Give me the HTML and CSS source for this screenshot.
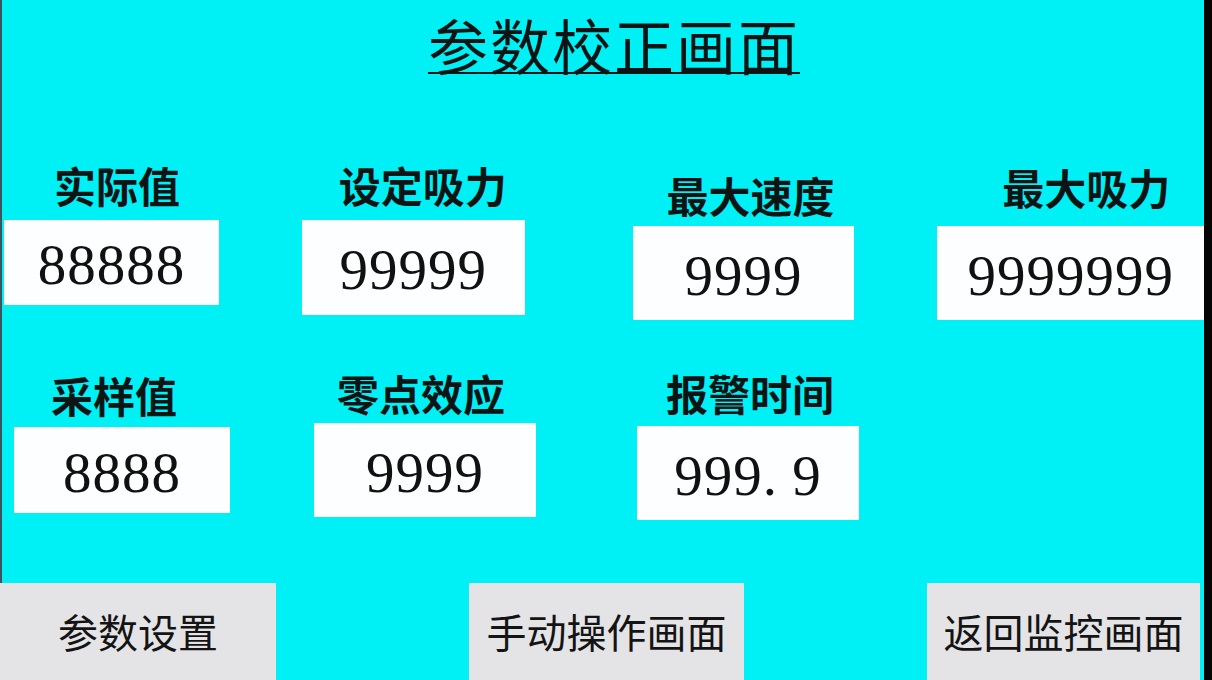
FILE: index.html
```html
<!DOCTYPE html>
<html lang="zh-CN">
<head>
<meta charset="utf-8">
<title>参数校正画面</title>
<link rel="stylesheet" href="styles.css">
</head>
<body>
<div class="screen">
  <h1 class="title"><span class="title-text">参数校正画面</span></h1>

  <div class="row row1">
    <div class="field f1">
      <div class="label">实际值</div>
      <div class="box">88888</div>
    </div>
    <div class="field f2">
      <div class="label">设定吸力</div>
      <div class="box">99999</div>
    </div>
    <div class="field f3">
      <div class="label">最大速度</div>
      <div class="box">9999</div>
    </div>
    <div class="field f4">
      <div class="label">最大吸力</div>
      <div class="box">9999999</div>
    </div>
  </div>

  <div class="row row2">
    <div class="field f5">
      <div class="label">采样值</div>
      <div class="box">8888</div>
    </div>
    <div class="field f6">
      <div class="label">零点效应</div>
      <div class="box">9999</div>
    </div>
    <div class="field f7">
      <div class="label">报警时间</div>
      <div class="box">999<span class="dot">.</span>9</div>
    </div>
  </div>

  <div class="actions">
    <button class="btn b1">参数设置</button>
    <button class="btn b2">手动操作画面</button>
    <button class="btn b3">返回监控画面</button>
  </div>
</div>
</body>
</html>
```

FILE: styles.css
```css
html, body {
  margin: 0;
  padding: 0;
  background: #050505;
  overflow: hidden;
}

.screen {
  width: 1204px;
  height: 680px;
  background: #00f1f5;
  box-shadow: inset 2px 0 0 #3a5560;
  display: flex;
  flex-direction: column;
  font-family: "Noto Sans CJK SC", "Noto Sans", sans-serif;
  color: #0c1414;
}

.title {
  margin: 0;
  padding: 0 0 0 22px;
  text-align: center;
  font-size: 60px;
  font-weight: 400;
  line-height: 88px;
  height: 88px;
  box-sizing: border-box;
  letter-spacing: 2px;
}

.title-text {
  text-decoration: underline;
  text-decoration-thickness: 2px;
  text-underline-offset: 2px;
  padding-left: 2px;
}

.row {
  display: flex;
  align-items: flex-start;
}

.row1 { margin-top: 76px; }
.row2 { margin-top: 52px; }

.field {
  display: flex;
  flex-direction: column;
}

.label {
  font-size: 42px;
  font-weight: 700;
  line-height: 42px;
  white-space: nowrap;
}

.box {
  background: #fdfeff;
  font-family: "Liberation Serif", "Times New Roman", serif;
  font-size: 57px;
  letter-spacing: 1px;
  color: #111;
  text-align: center;
  padding-top: 5px;
  box-sizing: border-box;
}

.dot {
  display: inline-block;
  padding-right: 0.25em;
}

/* row 1 */
.f1 { margin-left: 4px; width: 215px; }
.f1 .label { padding-left: 50px; margin-bottom: 14px; }
.f1 .box { height: 85px; line-height: 80px; }

.f2 { margin-left: 83px; width: 223px; }
.f2 .label { padding-left: 37px; margin-bottom: 14px; }
.f2 .box { height: 95px; line-height: 90px; }

.f3 { margin-left: 108px; width: 222px; padding-top: 10px; }
.f3 .label { padding-left: 34px; margin-bottom: 10px; }
.f3 .box { height: 94px; line-height: 89px; }

.f4 { margin-left: 83px; width: 267px; padding-top: 2px; }
.f4 .label { padding-left: 65px; margin-bottom: 18px; }
.f4 .box { height: 94px; line-height: 89px; }

/* row 2 */
.f5 { margin-left: 14px; width: 216px; padding-top: 2px; }
.f5 .label { padding-left: 37px; margin-bottom: 11px; }
.f5 .box { height: 86px; line-height: 81px; }

.f6 { margin-left: 84px; width: 222px; }
.f6 .label { padding-left: 23px; margin-bottom: 9px; }
.f6 .box { height: 94px; line-height: 89px; }

.f7 { margin-left: 101px; width: 222px; }
.f7 .label { padding-left: 29px; margin-bottom: 12px; }
.f7 .box { height: 94px; line-height: 89px; }

/* bottom buttons */
.actions {
  margin-top: auto;
  display: flex;
  align-items: flex-end;
}

.btn {
  height: 97px;
  border: none;
  margin: 0;
  padding: 0;
  background: #e4e4e7;
  font-family: "Noto Sans CJK SC", "Noto Sans", sans-serif;
  font-size: 40px;
  font-weight: 400;
  color: #141414;
  line-height: 97px;
  text-align: center;
}

.b1 { width: 276px; margin-left: 0; }
.b2 { width: 275px; margin-left: 193px; }
.b3 { width: 273px; margin-left: 183px; }
```
